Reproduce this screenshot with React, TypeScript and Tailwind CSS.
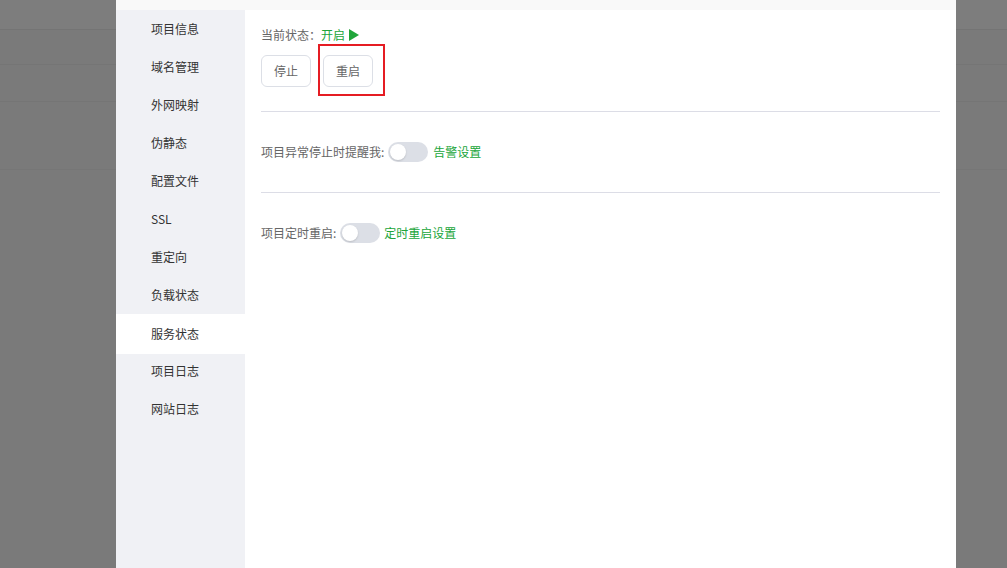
const menu = [
  "项目信息",
  "域名管理",
  "外网映射",
  "伪静态",
  "配置文件",
  "SSL",
  "重定向",
  "负载状态",
  "服务状态",
  "项目日志",
  "网站日志",
];

const Toggle = () => (
  <span className="relative inline-block w-[40px] h-[20px] rounded-full bg-[#dcdfe6]">
    <span className="absolute left-[2px] top-[2px] w-[16px] h-[16px] rounded-full bg-white shadow-[0_1px_2px_rgba(0,0,0,0.15)]" />
  </span>
);

export default function App() {
  return (
    <div
      className="relative w-full h-[568px] overflow-hidden bg-[#7a7a7a]"
      style={{ fontFamily: '"Noto Sans CJK SC", "Noto Sans", sans-serif' }}
    >
      {/* page behind the mask */}
      <div className="flex flex-col">
        <div className="h-[30px] bg-[#7d7d7d] border-b border-[#747474]" />
        <div className="h-[35px] border-b border-[#757575]" />
        <div className="h-[37px] border-b border-[#757575]" />
        <div className="h-[68px] border-b border-[#767676]" />
      </div>

      {/* dialog */}
      <div className="absolute left-[116px] top-0 w-[840px] h-full bg-white flex flex-col">
        <div className="h-[10px] bg-[#f9f9f9]" />
        <div className="flex flex-1">
          {/* side menu */}
          <div className="w-[129px] bg-[#f0f1f5] flex flex-col">
            {menu.map((item) =>
              item === "服务状态" ? (
                <div
                  key={item}
                  className="h-[40px] -mb-[2px] flex items-center pl-[35px] text-[12px] text-[#333] bg-white"
                >
                  {item}
                </div>
              ) : (
                <div
                  key={item}
                  className="relative h-[38px] flex items-center pl-[35px] text-[12px] text-[#333]"
                >
                  {item}
                </div>
              )
            )}
          </div>

          {/* content */}
          <div className="flex-1 px-4 pt-[15px] text-[12px]">
            <div className="h-[20px] flex items-center text-[#666]">
              当前状态：
              <span className="text-[#20a53a]">开启</span>
              <svg className="ml-[4px] w-[10px] h-[12px]" viewBox="0 0 10 12">
                <path d="M0 0 L10 6 L0 12 Z" fill="#20a53a" />
              </svg>
            </div>

            <div className="mt-[10px] flex gap-[12px]">
              <button className="w-[50px] h-[32px] rounded-[6px] border border-[#dcdfe6] bg-white text-[#666] text-[12px]">
                停止
              </button>
              <div className="relative">
                <button className="w-[50px] h-[32px] rounded-[6px] border border-[#dcdfe6] bg-white text-[#666] text-[12px]">
                  重启
                </button>
                <div className="absolute left-[-5px] top-[-11px] w-[67px] h-[52px] border-2 border-[#e51c23]" />
              </div>
            </div>

            <div className="mt-[24px] h-px bg-[#dcdde6]" />

            <div className="mt-[30px] h-[20px] flex items-center text-[#666]">
              项目异常停止时提醒我:
              <span className="ml-[4px] flex">
                <Toggle />
              </span>
              <span className="ml-[5px] text-[#20a53a]">告警设置</span>
            </div>

            <div className="mt-[30px] h-px bg-[#dcdde6]" />

            <div className="mt-[30px] h-[20px] flex items-center text-[#666]">
              项目定时重启:
              <span className="ml-[4px] flex">
                <Toggle />
              </span>
              <span className="ml-[4px] text-[#20a53a]">定时重启设置</span>
            </div>
          </div>
        </div>
      </div>
    </div>
  );
}
